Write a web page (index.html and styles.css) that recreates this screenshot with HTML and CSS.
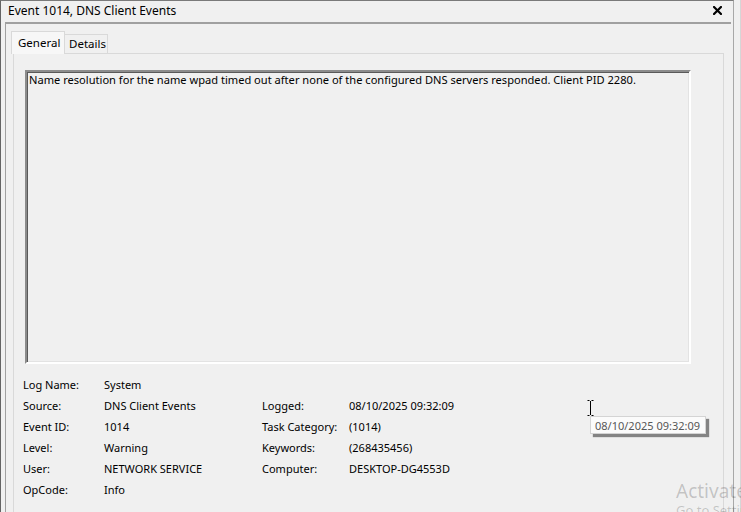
FILE: index.html
```html
<!DOCTYPE html>
<html>
<head>
<meta charset="utf-8">
<link rel="stylesheet" href="styles.css">
</head>
<body>
<div class="screen">
  <div class="window">
    <div class="titlebar">
      <span class="title">Event 1014, DNS Client Events</span>
      <svg class="close" width="9" height="9" viewBox="0 0 9 9"><path d="M1 1 L8 8 M8 1 L1 8" stroke="#000" stroke-width="2.2" stroke-linecap="square"/></svg>
    </div>
    <div class="frame">
      <div class="tabs">
        <div class="tab active">General</div>
        <div class="tab">Details</div>
      </div>
      <div class="panel">
        <div class="desc">Name resolution for the name wpad timed out after none of the configured DNS servers responded. Client PID 2280.</div>
        <div class="props">
          <span>Log Name:</span><span>System</span><span></span><span></span>
          <span>Source:</span><span>DNS Client Events</span><span>Logged:</span><span>08/10/2025 09:32:09</span>
          <span>Event ID:</span><span>1014</span><span>Task Category:</span><span>(1014)</span>
          <span>Level:</span><span>Warning</span><span>Keywords:</span><span>(268435456)</span>
          <span>User:</span><span>NETWORK SERVICE</span><span>Computer:</span><span>DESKTOP-DG4553D</span>
          <span>OpCode:</span><span>Info</span><span></span><span></span>
        </div>
      </div>
    </div>
  </div>
  <div class="edge"></div>

  <svg class="ibeam" width="7" height="16" viewBox="0 0 7 16"><path d="M0.5 0.5 H2.5 M4.5 0.5 H6.5 M3.5 1 V15 M0.5 15.5 H2.5 M4.5 15.5 H6.5" stroke="#000" stroke-width="1" fill="none"/></svg>
  <div class="tooltip">08/10/2025 09:32:09</div>
  <div class="watermark">
    <div class="wm1">Activate Windows</div>
    <div class="wm2">Go to Settings to activate Windows.</div>
  </div>
</div>
</body>
</html>
```

FILE: styles.css
```css
html, body {
  margin: 0;
  padding: 0;
  background: #f0f0f0;
}
.screen {
  position: relative;
  width: 741px;
  height: 512px;
  overflow: hidden;
  display: flex;
  background: #f0f0f0;
  font-family: "Noto Sans", "Open Sans", sans-serif;
  font-size: 11px;
  color: #000;
}
.window {
  width: 732px;
  height: 600px;
  border-top: 1px solid #7a7a7a;
  border-left: 1px solid #646464;
  border-right: 1px solid #a8a8a8;
  display: flex;
  flex-direction: column;
}
.edge {
  width: 3px;
  margin-left: 3px;
  border-right: 1px solid #d6d6d6;
}
.titlebar {
  height: 21px;
  display: flex;
  align-items: center;
  justify-content: space-between;
  padding-left: 7px;
  padding-right: 11px;
}
.title {
  font-size: 12px;
  position: relative;
  top: -1px;
}
.close {
  position: relative;
  top: -1px;
}
.frame {
  margin-left: 4px;
  margin-right: 2px;
  border-top: 2px solid #a0a0a0;
  border-left: 1px solid #a0a0a0;
  flex: 1;
  display: flex;
  flex-direction: column;
}
.tabs {
  display: flex;
  align-items: flex-end;
  margin-top: 6px;
  padding-left: 5px;
  height: 23px;
  position: relative;
  z-index: 1;
}
.tab {
  box-sizing: border-box;
  width: 43px;
  height: 19px;
  border: 1px solid #d9d9d9;
  border-left: none;
  border-bottom: none;
  padding-left: 4px;
  line-height: 18px;
  background: #f0f0f0;
  font-size: 11.5px;
  white-space: nowrap;
}
.tab.active {
  width: 54px;
  height: 23px;
  line-height: 21px;
  padding-left: 6px;
  background: #f7f7f7;
  border-left: 1px solid #d9d9d9;
  margin-bottom: -1px;
}
.panel {
  margin-left: 7px;
  margin-right: 7px;
  border: 1px solid #d9d9d9;
  border-bottom: none;
  flex: 1;
  display: flex;
  flex-direction: column;
  padding-left: 11px;
}
.desc {
  margin-top: 16px;
  border-top: 2px solid #8c8c8c;
  border-left: 2px solid #8c8c8c;
  border-right: 2px solid #fff;
  border-bottom: 2px solid #fff;
  box-shadow: inset 1px 1px 0 #5a5a5a, inset -1px -1px 0 #e3e3e3;
  padding: 0 4px 0 2px;
  font-size: 11.1px;
  line-height: 15px;
  box-sizing: content-box;
  width: 656px;
  height: 290px;
}
.props {
  margin-top: 10px;
  margin-left: -2px;
  display: grid;
  grid-template-columns: 81px 158px 87px auto;
  grid-auto-rows: 21px;
  line-height: 21px;
  font-size: 11px;
}
.ibeam {
  position: absolute;
  left: 587px;
  top: 400px;
}
.tooltip {
  position: absolute;
  left: 590px;
  top: 416px;
  height: 18px;
  padding: 0 5px 0 4px;
  line-height: 17px;
  background: #fbfbfb;
  border: 1px solid #d4d4d4;
  box-shadow: 3px 3px 1px rgba(0, 0, 0, 0.45);
  color: #575757;
  font-size: 11px;
  box-sizing: border-box;
}
.watermark {
  position: absolute;
  left: 676px;
  top: 480px;
  color: rgba(0, 0, 0, 0.2);
  white-space: nowrap;
}
.wm1 {
  font-size: 19px;
  line-height: 22px;
}
.wm2 {
  font-size: 13px;
  line-height: 16px;
}
```
